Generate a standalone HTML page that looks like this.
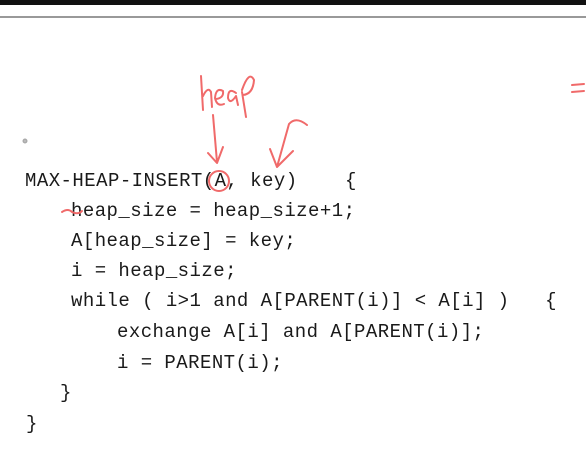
<!DOCTYPE html>
<html><head><meta charset="utf-8"><style>
html,body{margin:0;padding:0;width:586px;height:469px;overflow:hidden;background:#fff;}
.top{position:absolute;left:0;top:0;width:586px;height:5px;background:#111;}
.line{position:absolute;left:0;top:16px;width:586px;height:2px;background:#999;}
.c{position:absolute;font-family:"Liberation Mono",monospace;font-size:19px;color:#1a1a1a;white-space:pre;line-height:22px;letter-spacing:0.45px;}
svg{position:absolute;left:0;top:0;}
</style></head><body>
<div class="top"></div><div class="line"></div>
<div class="c" style="left:25px;top:170px">MAX-HEAP-INSERT(A, key)    {</div>
<div class="c" style="left:71px;top:200px">heap_size = heap_size+1;</div>
<div class="c" style="left:71px;top:230px">A[heap_size] = key;</div>
<div class="c" style="left:71px;top:260px">i = heap_size;</div>
<div class="c" style="left:71px;top:290px">while ( i>1 and A[PARENT(i)] &lt; A[i] )   {</div>
<div class="c" style="left:117px;top:321px">exchange A[i] and A[PARENT(i)];</div>
<div class="c" style="left:117px;top:352px">i = PARENT(i);</div>
<div class="c" style="left:60px;top:382px">}</div>
<div class="c" style="left:26px;top:413px">}</div>
<svg width="586" height="469" fill="none" stroke="#f06a6a" stroke-width="2" stroke-linecap="round" stroke-linejoin="round">
<circle cx="25" cy="141" r="1.5" stroke="#aaa"/>
<path d="M201 76 L203 110 M203 96 Q208 86 211 92 L212 107"/>
<path d="M216 99 Q224 98 223 91 Q216 87 215 98 Q217 107 224 104"/>
<path d="M236 93 Q228 87 228 98 Q230 105 236 96 L238 105"/>
<path d="M242 92 L246 117 M242 90 Q249 70 254 80 Q253 94 243 95"/>
<path d="M213 115 L217 162 M208 153 L217 163 L223 147"/>
<path d="M307 125 Q296 116 289 124 L277 167 M270 149 L277 167 L293 151"/>
<circle cx="219" cy="181" r="10"/>
<path d="M62 212 Q68 208 72 212 Q78 215 82 211"/>
<path d="M572 85 L584 84 M572 92 L584 91"/>
</svg>
</body></html>
